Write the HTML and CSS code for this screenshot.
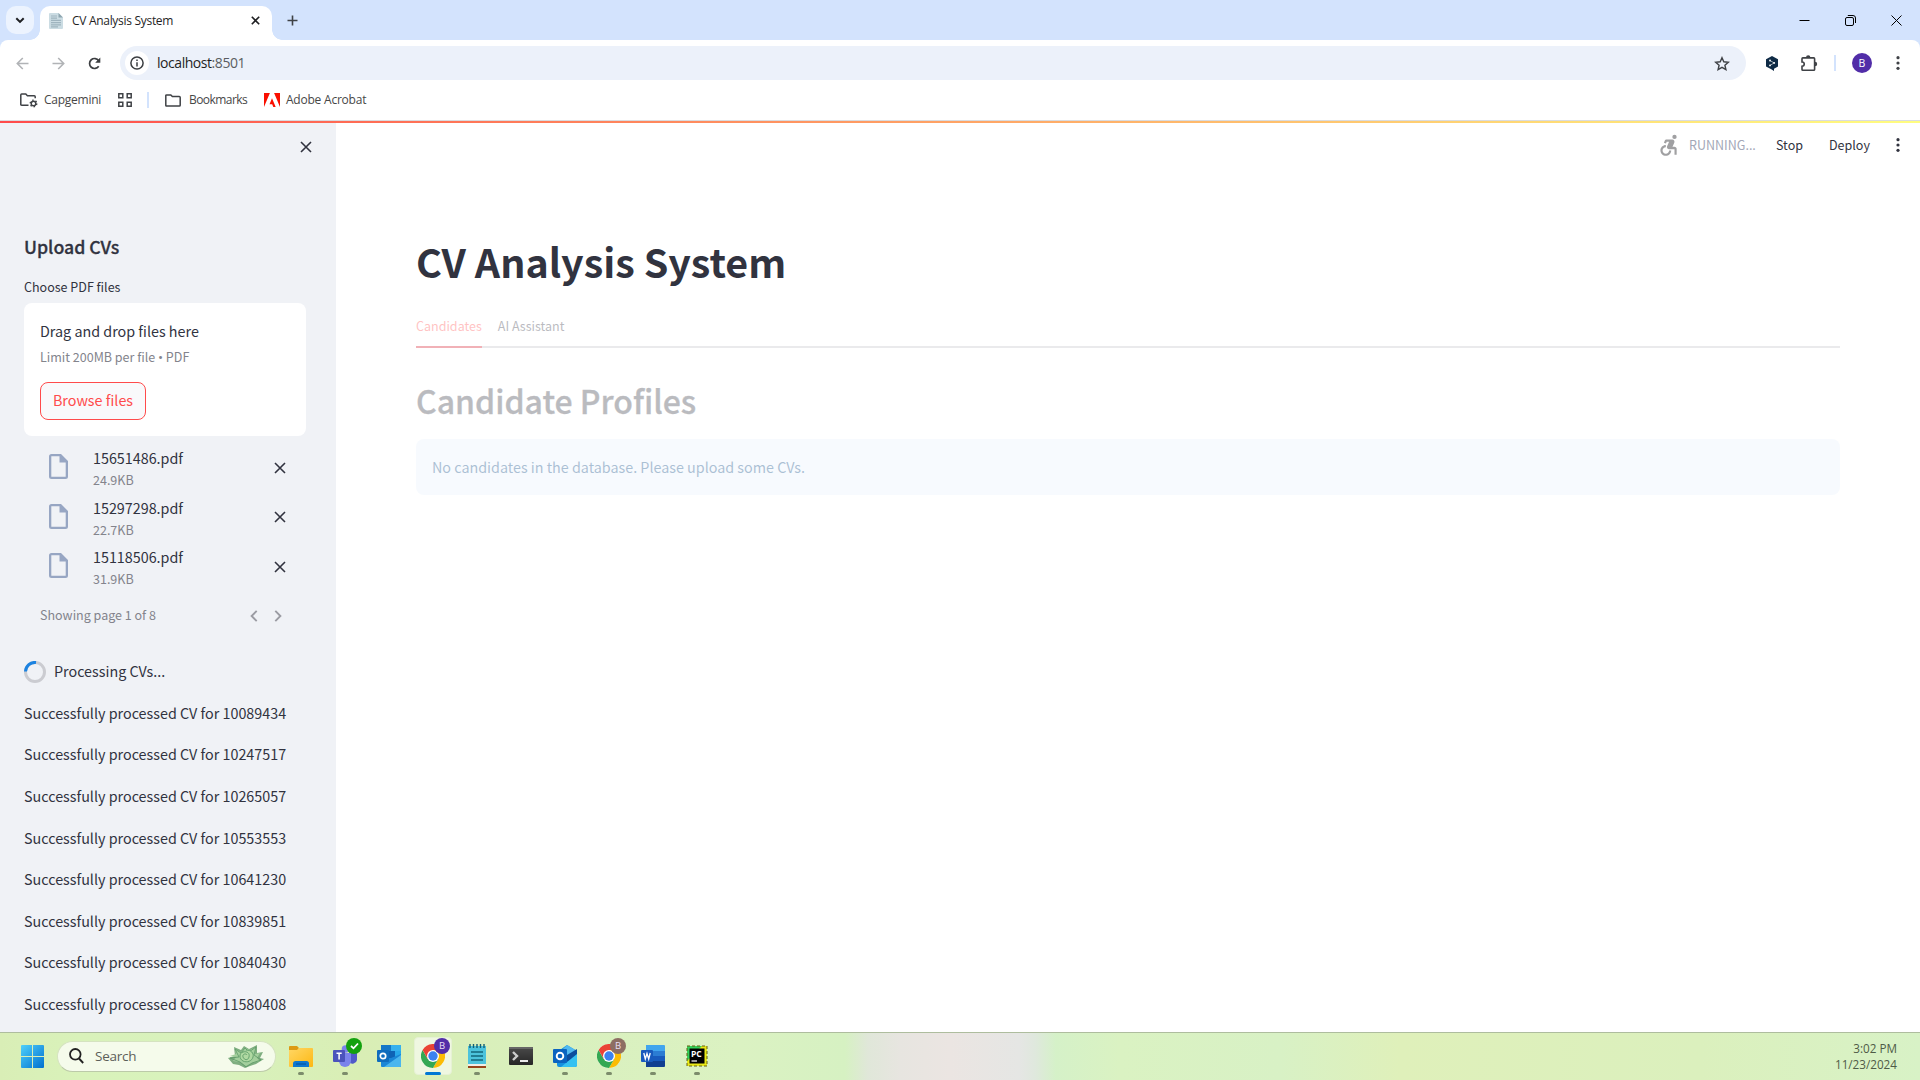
FILE: index.html
```
<!DOCTYPE html>
<html lang="en">
<head>
<meta charset="utf-8">
<title>CV Analysis System</title>
<link rel="stylesheet" href="styles.css">
</head>
<body>
<svg class="defs" width="0" height="0">
  <defs>
    <linearGradient id="win" x1="0" y1="0" x2="1" y2="1"><stop offset="0" stop-color="#4fd0fb"/><stop offset="1" stop-color="#0070cf"/></linearGradient>
    <linearGradient id="fold" x1="0" y1="0" x2="1" y2="1"><stop offset="0" stop-color="#ffd765"/><stop offset="1" stop-color="#fdb813"/></linearGradient>
    <linearGradient id="term" x1="0" y1="0" x2="0" y2="1"><stop offset="0" stop-color="#4a4a4a"/><stop offset="1" stop-color="#262626"/></linearGradient>
  </defs>
  <symbol id="i-close" viewBox="0 0 12 12"><path d="M1 1l10 10M11 1L1 11" fill="none" stroke="currentColor" stroke-width="1.6"/></symbol>
  <symbol id="i-file" viewBox="0 0 19 25"><path d="M2.500 0H12l7 7v15.500a2.500 2.500 0 0 1-2.500 2.500h-14A2.500 2.500 0 0 1 0 22.500v-20A2.500 2.500 0 0 1 2.500 0zM2.300 2.300v20.400h14.400V8.500h-6.200V2.300z" fill="currentColor" fill-rule="evenodd"/></symbol>
  <symbol id="i-folder" viewBox="0 0 16 13"><path d="M1.700.9h4.100l1.600 1.700h6.900q.9 0 .9.9v7.700q0 .9-.9.9H1.700q-.9 0-.9-.9V1.800q0-.9.9-.9z" fill="none" stroke="currentColor" stroke-width="1.500"/></symbol>
  <symbol id="i-dots" viewBox="0 0 4 14"><circle cx="2" cy="1.700" r="1.600"/><circle cx="2" cy="7" r="1.600"/><circle cx="2" cy="12.300" r="1.600"/></symbol>
  <symbol id="i-chrome" viewBox="0 0 24 24"><circle cx="12" cy="12" r="12" fill="#fff"/><path d="M12 6h10.400A12 12 0 0 1 12 24l5.200-9z" fill="#fbbc04"/><path d="M1.600 6A12 12 0 0 0 12 24l5.200-9H6.800z" fill="#34a853"/><path d="M1.600 6A12 12 0 0 1 22.400 6H12L6.800 15z" fill="#ea4335"/><circle cx="12" cy="12" r="6" fill="#fff"/><circle cx="12" cy="12" r="4.700" fill="#3b82f0"/></symbol>
</svg>

<header class="browser">
  <div class="tabstrip">
    <div class="tab-search"><svg width="10" height="7" viewBox="0 0 10 7"><path d="M1.300 1.200L5 4.900l3.700-3.700" fill="none" stroke="#1f2023" stroke-width="2"/></svg></div>
    <div class="tab">
      <svg class="favicon" width="14" height="16" viewBox="0 0 14 16"><path d="M1 0h8.500L14 4.500V15a1 1 0 0 1-1 1H1a1 1 0 0 1-1-1V1a1 1 0 0 1 1-1z" fill="#cbdce3"/><path d="M9.500 0v4.500H14z" fill="#8ea5b0"/><path d="M2 3h6M2 5.200h6M2 7.400h10M2 9.600h10M2 11.800h10M2 13.800h7" stroke="#9fb4bf" stroke-width="1.200"/></svg>
      <span class="tab-title">CV Analysis System</span>
      <svg class="tab-close" width="9" height="9" viewBox="0 0 9 9"><path d="M.8.8l7.400 7.400M8.200.8L.8 8.200" stroke="#1f2023" stroke-width="1.600"/></svg>
    </div>
    <svg class="new-tab" width="11" height="11" viewBox="0 0 11 11"><path d="M5.500.5v10M.5 5.500h10" stroke="#3f4246" stroke-width="1.600"/></svg>
    <div class="window-controls">
      <svg width="11" height="11" viewBox="0 0 11 11"><path d="M.5 5.500h10" stroke="#000"/></svg>
      <svg width="11" height="11" viewBox="0 0 11 11" fill="none" stroke="#000"><rect x=".5" y="2.500" width="8" height="8" rx="1.500"/><path d="M2.800.5H8A2.500 2.500 0 0 1 10.500 3v5"/></svg>
      <svg width="11" height="11" viewBox="0 0 11 11"><path d="M.5.5l10 10M10.500.5l-10 10" stroke="#000"/></svg>
    </div>
  </div>

  <div class="toolbar">
    <div class="nav">
      <svg width="13" height="13" viewBox="0 0 13 13" fill="none" stroke="#b1b3b6" stroke-width="1.600"><path d="M12.500 6.500H1.300M6.800 1L1.300 6.500 6.800 12"/></svg>
      <svg width="13" height="13" viewBox="0 0 13 13" fill="none" stroke="#b1b3b6" stroke-width="1.600"><path d="M.5 6.500h11.200M6.200 1l5.500 5.500L6.200 12"/></svg>
      <svg width="13" height="13" viewBox="0 0 13 13"><path d="M10.700 9.300A5 5 0 1 1 10.700 3.700" fill="none" stroke="#3b3e41" stroke-width="1.700"/><path d="M12.300.5v5.200H7.200z" fill="#3b3e41"/></svg>
    </div>
    <div class="omnibox">
      <div class="site-info"><svg width="14" height="14" viewBox="0 0 14 14"><circle cx="7" cy="7" r="6.100" fill="none" stroke="#3b3e41" stroke-width="1.500"/><path d="M7 6.200v4.200M7 3.500v1.600" stroke="#3b3e41" stroke-width="1.500"/></svg></div>
      <span class="url"><b>localhost</b>:8501</span>
      <svg class="star" width="16" height="15" viewBox="0 0 16 15"><path d="M8 1.700l1.800 4.100 4.500.4-3.400 3 1 4.400L8 11.300l-3.900 2.300 1-4.400-3.400-3 4.500-.4z" fill="none" stroke="#3f4246" stroke-width="1.400"/></svg>
    </div>
    <div class="extensions">
      <svg class="ext" width="12" height="15" viewBox="0 0 12 15"><path d="M6 0l6 3.200v7.200l-4 2.300V15l-2.700-1.800L0 10.400V3.200z" fill="#0f2b46"/><path d="M4 4.600l4.200 2.300L4 9.400" fill="none" stroke="#fff" stroke-width=".6"/><circle cx="4" cy="4.500" r=".9" fill="#fff"/><circle cx="8.200" cy="6.900" r=".9" fill="#fff"/><circle cx="4" cy="9.400" r=".9" fill="#fff"/></svg>
      <svg class="puzzle" width="17" height="17" viewBox="0 0 17 17"><path d="M1.800 2.900h11q.8 0 .8.800v10.700q0 .8-.8.800h-11q-.8 0-.8-.8v-3.200c3 0 3-4.200 0-4.200V3.700q0-.8.800-.8z" fill="none" stroke="#3f4246" stroke-width="1.600"/><path d="M5 2.500a2.200 2.200 0 0 1 4.400 0zM14 6.800a2.200 2.200 0 0 1 0 4.400z" fill="#3f4246"/></svg>
      <i class="divider"></i>
      <span class="avatar">B</span>
      <svg class="menu" width="4" height="14" fill="#3f4246"><use href="#i-dots"/></svg>
    </div>
  </div>

  <div class="bookmarks">
    <svg class="bm-managed" width="18" height="15" viewBox="0 0 18 15"><path d="M8.500 12.300H1.700q-.9 0-.9-.9V2q0-.9.900-.9h4.100l1.600 1.700h6.900q.9 0 .9.900v1.500" fill="none" stroke="#3f4246" stroke-width="1.500"/><circle cx="13.500" cy="10.500" r="2.300" fill="none" stroke="#3f4246" stroke-width="1.500"/><circle cx="13.500" cy="10.500" r="3.300" fill="none" stroke="#3f4246" stroke-width="1.300" stroke-dasharray="1.500 1.955"/></svg>
    <span class="bm-cap">Capgemini</span>
    <svg class="bm-apps" width="14" height="14" viewBox="0 0 14 14" fill="none" stroke="#3f4246" stroke-width="1.500"><path d="M.8.8h4v4h-4zM9.200.8h4v4h-4zM.8 9.200h4v4h-4zM9.200 9.200h4v4h-4z"/></svg>
    <i class="divider"></i>
    <svg class="bm-folder" width="16" height="13" color="#3f4246"><use href="#i-folder"/></svg>
    <span class="bm-book">Bookmarks</span>
    <svg class="bm-adobe" width="16" height="14" viewBox="0 0 16 14"><path d="M0 0h5.900L0 14zM10.100 0H16v14zM8 5.200l3.700 8.800H9.300l-1.100-2.800H5.500z" fill="#fa0f00"/></svg>
    <span class="bm-acrobat">Adobe Acrobat</span>
  </div>
</header>

<div class="app">
  <div class="decoration"></div>
  <aside class="sidebar">
    <div class="sidebar-head"><svg width="12" height="12"><use href="#i-close"/></svg></div>
    <h2 class="side-title">Upload CVs</h2>
    <label class="side-label">Choose PDF files</label>
    <section class="dropzone">
      <span class="drop-text">Drag and drop files here</span>
      <small class="drop-limit">Limit 200MB per file <span class="bullet">•</span> PDF</small>
      <button class="browse">Browse files</button>
    </section>
    <ul class="files">
      <li class="file"><svg class="file-icon" width="19" height="25"><use href="#i-file"/></svg><div class="file-data"><span>15651486.pdf</span><small>24.9KB</small></div><svg width="12" height="12"><use href="#i-close"/></svg></li>
      <li class="file"><svg class="file-icon" width="19" height="25"><use href="#i-file"/></svg><div class="file-data"><span>15297298.pdf</span><small>22.7KB</small></div><svg width="12" height="12"><use href="#i-close"/></svg></li>
      <li class="file"><svg class="file-icon" width="19" height="25"><use href="#i-file"/></svg><div class="file-data"><span>15118506.pdf</span><small>31.9KB</small></div><svg width="12" height="12"><use href="#i-close"/></svg></li>
    </ul>
    <div class="pagination">
      <small>Showing page 1 of 8</small>
      <svg width="8" height="12" viewBox="0 0 8 12"><path d="M6.700.9L1.600 6l5.100 5.100" fill="none" stroke="#9b9ca3" stroke-width="1.900"/></svg>
      <svg width="8" height="12" viewBox="0 0 8 12"><path d="M1.300.9L6.400 6l-5.100 5.100" fill="none" stroke="#9b9ca3" stroke-width="1.900"/></svg>
    </div>
    <div class="spinner"><svg width="22" height="22" viewBox="0 0 22 22" fill="none" stroke-width="3"><circle cx="11" cy="11" r="9.500" stroke="#cbccd1"/><path d="M1.500 10.500A9.500 9.500 0 0 1 12 1.500" stroke="#1c83e1"/></svg><span>Processing CVs...</span></div>
    <div class="log">
      <p>Successfully processed CV for 10089434</p>
      <p>Successfully processed CV for 10247517</p>
      <p>Successfully processed CV for 10265057</p>
      <p>Successfully processed CV for 10553553</p>
      <p>Successfully processed CV for 10641230</p>
      <p>Successfully processed CV for 10839851</p>
      <p>Successfully processed CV for 10840430</p>
      <p>Successfully processed CV for 11580408</p>
    </div>
  </aside>

  <main class="main">
    <div class="app-toolbar">
      <svg class="runner" width="26" height="26" viewBox="0 0 24 24" fill="#a0a0a2"><circle cx="18" cy="4.540" r="2"/><path d="M15 17h-2c0 1.650-1.350 3-3 3s-3-1.350-3-3 1.350-3 3-3v-2c-2.760 0-5 2.240-5 5s2.240 5 5 5 5-2.240 5-5zm3-3.500h-1.860l1.670-3.670C18.420 8.500 17.440 7 15.960 7h-5.200c-.81 0-1.540.47-1.870 1.200L8.220 10l1.920.53.65-1.530H13l-1.830 4.100c-.6 1.330.39 2.900 1.850 2.900H18v5h2v-5.500c0-1.100-.9-2-2-2z"/></svg>
      <span class="running">RUNNING...</span>
      <span class="stop">Stop</span>
      <span class="deploy">Deploy</span>
      <svg width="4" height="14" fill="#31333f"><use href="#i-dots"/></svg>
    </div>
    <div class="content">
      <h1>CV Analysis System</h1>
      <div class="stale">
        <nav class="tabs"><a class="active">Candidates</a><a>AI Assistant</a></nav>
        <h2>Candidate Profiles</h2>
        <div class="alert">No candidates in the database. Please upload some CVs.</div>
      </div>
    </div>
  </main>
</div>

<footer class="taskbar">
  <svg class="start" width="23" height="23" viewBox="0 0 23 23"><path d="M1 0h10v11H0V1a1 1 0 0 1 1-1zM12 0h10a1 1 0 0 1 1 1v10H12zM0 12h11v11H1a1 1 0 0 1-1-1zM12 12h11v10a1 1 0 0 1-1 1H12z" fill="url(#win)"/></svg>
  <div class="search">
    <svg width="15" height="16" viewBox="0 0 15 16"><circle cx="6.300" cy="6.300" r="5.300" fill="none" stroke="#222" stroke-width="1.800"/><path d="M10 10.500l4.200 4.500" stroke="#222" stroke-width="1.900"/></svg>
    <span>Search</span>
    <svg class="plant" width="38" height="24" viewBox="0 0 38 24">
      <path d="M1 14l7-2-1-9 7 3 3-4 5 3 8-4 0 8 6-1-3 6 4 1-8 5-6 2-5 2-6-3-6-1z" fill="#7fae80"/>
      <path d="M8 5l6 3 4-4 5 2 6-3-1 7 5-1-3 5 3 3-8 2-6 3-6-4-7-1 3-4-6-1 6-2z" fill="#a3cf9c"/>
      <path d="M8 5l4 8-9 1 10 4 6 5 6-4 9-3-7-5 2-8-7 5-4-4-4 5z" fill="none" stroke="#5c9866" stroke-width=".8"/>
      <path d="M19 6c5 0 8 3 7 7s-6 6-10 4-4-8 0-9 7 1 6 5-5 3-6 0 3-4 4-2" fill="#b0d9a2" stroke="#5f9d69" stroke-width=".9"/>
    </svg>
  </div>
  <div class="tasks">
    <div class="task"><svg width="24" height="24" viewBox="0 0 24 24"><path d="M0 3q0-1 1-1h7l2 2-2 3H0z" fill="#dd9a12"/><path d="M0 6h8l2-2h13q1 0 1 1v17q0 1-1 1H1q-1 0-1-1z" fill="url(#fold)"/><path d="M4 23v-3.500Q4 17 6.500 17h11q2.500 0 2.500 2.500V23z" fill="#0f78d0"/><path d="M7 20h10" stroke="#064f9c"/></svg></div>
    <div class="task"><svg width="24" height="24" viewBox="0 0 24 24"><circle cx="12.500" cy="5" r="3.800" fill="#7b83eb"/><path d="M16 8h7q1 0 1 1v7a4.500 4.500 0 0 1-8 2z" fill="#5059c9"/><path d="M6 9h12v8a6 6 0 0 1-12 0z" fill="#7b83eb"/><rect y="6" width="12" height="12" rx="1" fill="#4b53bc"/><path d="M3.500 9.300h5.200M6.100 9v6.500" stroke="#fff" stroke-width="1.500"/></svg><span class="badge check"><svg width="9" height="8" viewBox="0 0 9 8"><path d="M1 4l2.500 2.300L8 1.500" fill="none" stroke="#fff" stroke-width="1.800"/></svg></span></div>
    <div class="task idle"><svg width="24" height="24" viewBox="0 0 24 24"><path d="M4 1h19q1 0 1 1v20H4z" fill="#28a8ea"/><path d="M4 1h10v6H4z" fill="#1478c8"/><path d="M14 1h10v6H14z" fill="#35b1ee"/><path d="M12 7h6v7h-6z" fill="#0f63b5"/><path d="M4 14h10l10-4v12q0 1-1 1H5q-1 0-1-1z" fill="#1a86d6"/><path d="M7 23l17-12v11q0 1-1 1z" fill="#4bb6ee"/><rect y="6" width="12" height="12" rx="1" fill="#0f6cbd"/><circle cx="6" cy="12" r="2.700" fill="none" stroke="#fff" stroke-width="1.700"/></svg></div>
    <div class="task current"><svg width="24" height="24"><use href="#i-chrome"/></svg><span class="badge purple">B</span></div>
    <div class="task"><svg width="24" height="24" viewBox="0 0 24 24"><path d="M3 2h18v18H3z" fill="#4cc3dc"/><path d="M3 20h18l-1 3H3z" fill="#f1ede5"/><path d="M3 22h18v2H3z" fill="#98451b"/><path d="M5 0v4M8.500 0v4M12 0v4M15.500 0v4M19 0v4" stroke="#115e75" stroke-width="1.400"/><path d="M6 8h12M6 12h12M6 16h12" stroke="#12677b" stroke-width="1.600"/></svg></div>
    <div class="task idle"><svg width="24" height="24" viewBox="0 0 24 24"><rect y="3" width="24" height="18" rx="1" fill="url(#term)"/><path d="M0 3h24v2H0z" fill="#666"/><path d="M4 8l4 4-4 4" fill="none" stroke="#ccc" stroke-width="2.400"/><path d="M11 17h8" stroke="#fff" stroke-width="1.800"/></svg></div>
    <div class="task"><svg width="24" height="24" viewBox="0 0 24 24"><path d="M4 8l10-7 10 6v14q0 2-2 2H6q-2 0-2-2z" fill="#1490df"/><path d="M14 1l10 6-9 8-8-7z" fill="#50b9f0"/><path d="M14 11l10-6v7l-10 6z" fill="#0b4d9d"/><path d="M24 10v11q0 2-2 2H8z" fill="#35c1f1"/><rect y="5" width="14" height="14" rx="1" fill="#0a64c0"/><circle cx="7" cy="12" r="3.300" fill="none" stroke="#fff" stroke-width="1.900"/></svg></div>
    <div class="task"><svg width="24" height="24"><use href="#i-chrome"/></svg><span class="badge brown">B</span></div>
    <div class="task"><svg width="24" height="24" viewBox="0 0 24 24"><path d="M5 1h18q1 0 1 1v5H5z" fill="#41a5ee"/><path d="M5 7h19v5H5z" fill="#2b7cd3"/><path d="M5 12h19v5H5z" fill="#185abd"/><path d="M5 17h19v5q0 1-1 1H5z" fill="#103f91"/><rect y="6" width="12" height="12" rx="1" fill="#185abd"/><path d="M2.800 9l1.500 6L6 9.500 7.700 15l1.500-6" fill="none" stroke="#fff" stroke-width="1.300"/></svg></div>
    <div class="task"><svg width="24" height="24" viewBox="0 0 24 24"><path d="M2 2h20v20H2z" fill="#e8e818"/><path d="M2 2h15L2 17z" fill="#35d058"/><path d="M2 2h20v20H2z" fill="none" stroke="#665f13" stroke-dasharray="3 2"/><path d="M4.500 4.500h15v15h-15z" fill="#000"/><path d="M6.500 17h5.500" stroke="#fff" stroke-width="1.200"/></svg><span class="pc">PC</span></div>
  </div>
  <div class="clock"><span>3:02 PM</span><span>11/23/2024</span></div>
</footer>
</body>
</html>
```
FILE: styles.css
```
* { box-sizing: border-box; }

body {
  margin: 0;
  width: 1920px;
  height: 1080px;
  overflow: hidden;
  display: flex;
  flex-direction: column;
  background: #fff;
  color: #31333f;
  font-family: "Noto Sans CJK SC", "Open Sans", sans-serif;
  font-size: 14.330px;
}

svg { display: block; flex: none; }
.defs { position: absolute; }
h1, h2, p, ul { margin: 0; padding: 0; }
ul { list-style: none; }
small { font-size: 12.530px; }

/* Browser chrome */
.browser {
  height: 121px;
  flex: none;
  background: #d3e3fd;
  border-bottom: 1px solid #dadce0;
  font-family: "Open Sans", sans-serif;
  color: #474747;
}
.tabstrip { display: flex; align-items: center; height: 40px; padding-left: 6px; }
.tab-search {
  display: flex; align-items: center; justify-content: center;
  width: 28px; height: 28px; border-radius: 10px; background: #ecf3fe;
}
.tab {
  position: relative;
  display: flex; align-items: center;
  align-self: flex-end;
  width: 232px; height: 34px;
  margin-left: 6px; padding: 0 12px 5px 9px;
  border-radius: 10px 10px 0 0;
  background: #fff;
}
.tab::before, .tab::after { content: ""; position: absolute; bottom: 0; width: 10px; height: 10px; }
.tab::before { left: -10px; background: radial-gradient(circle at 0 0, transparent 9.5px, #fff 10px); }
.tab::after { right: -10px; background: radial-gradient(circle at 100% 0, transparent 9.5px, #fff 10px); }
.tab-title { margin-left: 9px; font-size: 12px; letter-spacing: -.3px; color: #1f1f1f; white-space: nowrap; }
.tab-close { margin-left: auto; }
.new-tab { margin-left: 15px; }
.window-controls { display: flex; gap: 35px; margin-left: auto; padding-right: 18px; }

.toolbar {
  display: flex; align-items: center;
  height: 46px; padding: 0 20px 0 16px;
  background: #fff; border-radius: 8px 8px 0 0;
}
.nav { display: flex; gap: 23px; width: 104px; }
.omnibox {
  display: flex; align-items: center;
  width: 1626px; height: 34px; padding: 0 16px 0 5px;
  border-radius: 17px; background: #ecf1fa;
}
.site-info { display: grid; place-items: center; width: 24px; height: 24px; border-radius: 50%; background: #fff; }
.url { margin-left: 8px; padding-bottom: 1px; font-size: 14px; letter-spacing: -.45px; color: #5a5d61; }
.url b { font-weight: 400; color: #1f1f1f; }
.star { margin-left: auto; }
.extensions { display: flex; align-items: center; flex: 1; }
.ext { margin-left: 20px; }
.puzzle { margin-left: 23px; }
.divider { width: 2px; height: 16px; background: #d3e3fd; }
.extensions .divider { margin-left: 16px; }
.avatar {
  display: grid; place-items: center;
  width: 20px; height: 20px; margin-left: 16px;
  border-radius: 50%; background: #512da8; color: #fff; font-size: 10.500px;
}
.menu { margin-left: auto; }

.bookmarks {
  display: flex; align-items: center;
  height: 34px; padding: 0 0 6px 20px;
  background: #fff; font-size: 12px;
  white-space: nowrap;
}
.bookmarks span { padding-bottom: 1px; }
.bm-cap { width: 56px; margin-left: 6px; letter-spacing: -.25px; }
.bm-apps { margin-left: 18px; }
.bookmarks .divider { margin-left: 15px; }
.bm-folder { margin-left: 16px; }
.bm-book { width: 57px; margin-left: 8px; letter-spacing: -.55px; }
.bm-adobe { margin-left: 18px; }
.bm-acrobat { margin-left: 6px; letter-spacing: -.22px; }

/* App */
.app { position: relative; display: flex; flex: 1; min-height: 0; }
.decoration {
  position: absolute; top: 0; left: 0; right: 0; height: 2px;
  background: linear-gradient(90deg, #ff4b4b, #fffd80);
}
.sidebar { width: 336px; flex: none; padding: 0 30px 0 24px; background: #f0f2f6; overflow: hidden; }
.sidebar-head { display: flex; justify-content: flex-end; height: 109px; margin-right: -6px; padding: 20px 0 0; }
.side-title { height: 32px; line-height: 32px; font-size: 17.700px; font-weight: 500; -webkit-text-stroke: .3px; }
.side-label { display: block; height: 41px; padding-top: 14px; line-height: 21px; font-size: 12.530px; }
.dropzone {
  display: flex; flex-direction: column; align-items: flex-start;
  height: 133px; padding: 16px; border-radius: 8px; background: #fff;
}
.drop-text { height: 24px; line-height: 24px; }
.drop-limit { height: 20px; margin-top: 4px; line-height: 20px; color: #83848c; white-space: nowrap; }
.bullet { font-family: "Open Sans", sans-serif; font-size: 13.500px; line-height: 1; }
.browse {
  width: 106px; height: 38px; margin-top: 15px; padding: 0 0 2px;
  border: 1px solid #ff4b4b; border-radius: 8px;
  background: #f9f9fb; color: #ff4b4b; font: inherit; line-height: 34px;
}
.files { padding-top: 10px; }
.file { display: flex; height: 49.500px; padding: 0 20px 0 25px; }
.file > svg { margin-top: 15.800px; }
.file > .file-icon { margin-top: 8px; color: #97a6c3; }
.file-data { display: flex; flex-direction: column; flex: 1; margin-left: 25px; }
.file-data span { height: 24px; line-height: 24px; }
.file-data small { line-height: 19px; }
.file-data small, .pagination small { color: #83848c; }
.pagination { display: flex; align-items: center; height: 24px; margin-top: 9px; padding: 0 24px 0 16px; gap: 16px; }
.pagination small { margin-right: auto; line-height: 22px; padding-bottom: 2px; }
.spinner { display: flex; align-items: center; gap: 8px; height: 24px; margin-top: 32.500px; }
.spinner span { line-height: 22px; padding-bottom: 3px; }
.log { padding-top: 7.800px; }
.log p { height: 41.600px; line-height: 41.600px; white-space: nowrap; }

.main { flex: 1; min-width: 0; }
.app-toolbar { display: flex; align-items: center; height: 48px; padding-right: 20px; font-size: 12.530px; line-height: 48px; }
.runner { margin-left: auto; }
.running { width: 67px; margin-left: 8px; color: #a3a8b8; }
.stop { width: 28px; margin-left: 20px; }
.deploy { width: 42px; margin: 0 25px 0 25px; }
.content { padding: 60px 80px 0; }
h1 { height: 64px; line-height: 64px; font-size: 39.420px; font-weight: 700; }
.stale { opacity: .33; padding-top: 13px; }
.tabs { display: flex; gap: 16px; height: 42px; border-bottom: 2px solid #c0c1c6; font-size: 12.530px; line-height: 40px; }
.tabs a { height: 42px; }
.tabs .active { color: #ff4b4b; border-bottom: 2px solid #d51728; }
.stale h2 { height: 61px; margin: 22px 0 8px; line-height: 61px; font-size: 32px; font-weight: 500; -webkit-text-stroke: .35px; }
.alert { height: 56px; padding: 0 16px; line-height: 56px; border-radius: 8px; background: #e8f2fd; color: #004280; }

/* Taskbar */
.taskbar {
  display: flex; align-items: center;
  height: 48px; flex: none; padding-bottom: 1px;
  font-family: "Open Sans", sans-serif;
  border-top: 1px solid #aebd9e;
  background: linear-gradient(90deg, #d9eeb6 0, #d9f2ba 80px, #d8f2bd 200px, #d9eeb5 360px, #d9f0be 560px, #dbf2c2 740px, #d6f1c2 845px, #e0e7d9 868px, #e7e5e0 900px, #ebe5e2 950px, #e5e6e4 1020px, #dfe8dd 1035px, #d5f1c8 1056px, #daf2c2 1120px, #d8f1c5 1280px, #dff0ba 1400px, #dbf0bd 1700px, #d8f2c6 1920px);
}
.start { margin-left: 21px; }
.search {
  display: flex; align-items: center;
  width: 219px; height: 31px; margin-left: 13px; padding: 0 10px 0 11px;
  border: 1px solid #d5e3c0; border-bottom-color: #bccaa9; border-radius: 16px;
  background: #f5fbeb; color: #5d5f59;
}
.search span { margin-left: 11px; font-size: 13.500px; letter-spacing: -.25px; }
.plant { margin-left: auto; }
.tasks { display: flex; margin-left: 3px; }
.task { position: relative; display: grid; place-items: center; width: 44px; height: 44px; }
.task::after {
  content: ""; position: absolute; left: 19px; bottom: 3px;
  width: 6px; height: 3px; border-radius: 2px; background: #7c8c6b;
}
.task.idle::after { display: none; }
.task.current::before { content: ""; position: absolute; inset: 3px 3px; border-radius: 4px; background: #eff7e1; border: 1px solid #e6f1d5; }
.task.current svg { position: relative; }
.task.current::after { left: 14px; width: 16px; background: #0078d4; }
.badge {
  position: absolute; left: 23px; top: 4px;
  display: grid; place-items: center;
  width: 16px; height: 16px; border-radius: 50%;
  color: #e8dff5; font-size: 9.500px; line-height: 16px;
}
.check { background: #13a10e; }
.purple { background: #512da8; }
.brown { background: #8d6e63; }
.pc { position: absolute; left: 16px; top: 14px; font-size: 8.500px; font-weight: 700; line-height: 12px; color: #fff; }
.clock {
  display: flex; flex-direction: column; align-items: flex-end;
  margin-left: auto; padding-right: 23px;
  font-size: 11.700px; line-height: 16px; color: #4f5b47;
}
```
